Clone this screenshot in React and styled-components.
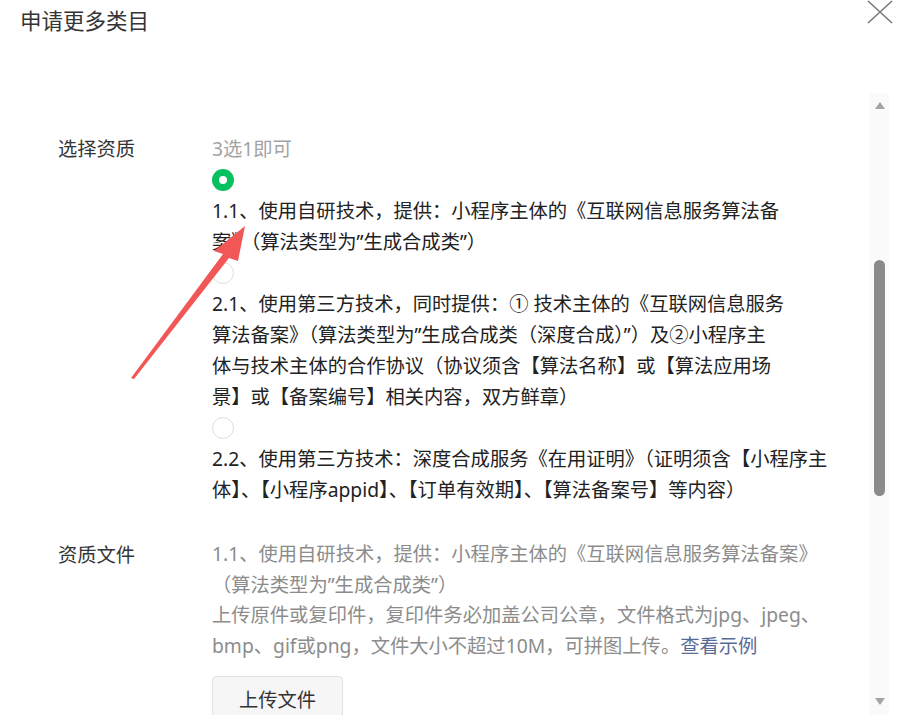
import styled, { createGlobalStyle } from "styled-components";

const GlobalStyle = createGlobalStyle`
  html, body {
    margin: 0;
    padding: 0;
    background: #fff;
  }
  body {
    font-family: "Noto Sans", "Noto Sans CJK SC", sans-serif;
    color: #333;
  }
`

const options = [
  {
    id: "1.1",
    checked: true,
    lines: [
      "1.1、使用自研技术，提供：小程序主体的《互联网信息服务算法备",
      "案》（算法类型为”生成合成类”）",
    ],
  },
  {
    id: "2.1",
    lines: [
      "2.1、使用第三方技术，同时提供：① 技术主体的《互联网信息服务",
      "算法备案》（算法类型为”生成合成类（深度合成）”）及②小程序主",
      "体与技术主体的合作协议（协议须含【算法名称】或【算法应用场",
      "景】或【备案编号】相关内容，双方鲜章）",
    ],
  },
  {
    id: "2.2",
    lines: [
      "2.2、使用第三方技术：深度合成服务《在用证明》（证明须含【小程序主",
      "体】、【小程序appid】、【订单有效期】、【算法备案号】等内容）",
    ],
  },
]

const Lines = ({ lines }) =>
  lines.map((line, i) => (
    <span key={i}>
      {line}
      {i < lines.length - 1 && <br />}
    </span>
  ))

const App = () => {
  return (
    <>
      <GlobalStyle />
      <Dialog>
        <Header>
          <Title>申请更多类目</Title>
          <CloseBtn aria-label="关闭">
            <svg width="26" height="24" viewBox="0 0 26 24">
              <path d="M1 1 L25 23 M25 1 L1 23" stroke="#7a7a7a" strokeWidth="1.6" fill="none" />
            </svg>
          </CloseBtn>
        </Header>
        <Body>
          <Content>
            <Row>
              <Label>选择资质</Label>
              <Field>
                <Hint>3选1即可</Hint>
                {options.map((opt) => (
                  <Option key={opt.id}>
                    <Radio $checked={opt.checked} />
                    <OptionText>
                      <Lines lines={opt.lines} />
                    </OptionText>
                  </Option>
                ))}
              </Field>
            </Row>
            <Row $gap="34px">
              <Label>资质文件</Label>
              <Field>
                <Desc>
                  1.1、使用自研技术，提供：小程序主体的《互联网信息服务算法备案》
                  <br />
                  （算法类型为”生成合成类”）
                  <br />
                  上传原件或复印件，复印件务必加盖公司公章，文件格式为jpg、jpeg、
                  <br />
                  bmp、gif或png，文件大小不超过10M，可拼图上传。<Link>查看示例</Link>
                </Desc>
                <UploadBtn>上传文件</UploadBtn>
              </Field>
            </Row>
          </Content>
          <Track>
            <Arrow />
            <Thumb />
            <Arrow $down />
          </Track>
        </Body>
        <Pointer viewBox="0 0 905 715" width="905" height="715">
          <polygon
            points="245,226 214,251 223,254 131,378 134,379 229,258 238,261"
            fill="#f25757"
          />
        </Pointer>
      </Dialog>
    </>
  )
}

const Dialog = styled.div`
  position: relative;
  height: 715px;
  display: flex;
  flex-direction: column;
  overflow: hidden;
  background: #fff;
`
const Header = styled.div`
  height: 93px;
  flex-shrink: 0;
  display: flex;
  justify-content: space-between;
  align-items: flex-start;
`
const Title = styled.h1`
  margin: 0;
  padding: 7px 0 0 20px;
  font-size: 21.5px;
  line-height: 27px;
  font-weight: 400;
  color: #353535;
`
const CloseBtn = styled.button`
  margin: 0 12px 0 0;
  padding: 0;
  border: 0;
  background: none;
  display: flex;
`
const Body = styled.div`
  flex: 1;
  min-height: 0;
  display: flex;
`
const Content = styled.div`
  flex: 1;
  overflow: hidden;
  padding: 40px 0 0 58px;
  font-size: 19.3px;
  line-height: 31px;
`
const Row = styled.div`
  display: grid;
  grid-template-columns: 154px 1fr;
  margin-top: ${(p) => p.$gap || "0"};
`
const Label = styled.div`
  color: #353535;
`
const Field = styled.div`
  display: flex;
  flex-direction: column;
  align-items: flex-start;
`
const Hint = styled.div`
  color: #a3a3a3;
`
const Option = styled.div`
  display: flex;
  flex-direction: column;
  align-items: flex-start;
`
const Radio = styled.span`
  box-sizing: border-box;
  width: 22px;
  height: 22px;
  margin: 5px 0 4px;
  border-radius: 50%;
  border: ${(p) => (p.$checked ? "7px solid #07c160" : "1px solid #dedede")};
  background: #fff;
`
const OptionText = styled.div`
  color: #222;
  white-space: nowrap;
`
const Desc = styled.div`
  color: #8c8c8c;
  white-space: nowrap;
  line-height: 30.7px;
`
const Link = styled.a`
  color: #576b95;
  cursor: pointer;
`
const UploadBtn = styled.button`
  margin-top: 14px;
  width: 131px;
  height: 46px;
  border: 1px solid #e2e2e2;
  border-radius: 4px;
  background: #f6f6f7;
  font-family: inherit;
  font-size: 19.3px;
  color: #333;
`
const Track = styled.div`
  width: 19px;
  margin-right: 16px;
  background: #fafafa;
  display: flex;
  flex-direction: column;
  align-items: center;
`
const Arrow = styled.span`
  width: 0;
  height: 0;
  border-left: 5.5px solid transparent;
  border-right: 5.5px solid transparent;
  ${(p) =>
    p.$down
      ? `border-top: 7px solid #a3a3a3; margin-top: auto; margin-bottom: 10px;`
      : `border-bottom: 7px solid #a3a3a3; margin-top: 9px;`}
`
const Thumb = styled.span`
  width: 11px;
  height: 236px;
  margin-top: 151px;
  border-radius: 6px;
  background: #8a8a8a;
`
const Pointer = styled.svg`
  position: absolute;
  left: 0;
  top: 0;
  pointer-events: none;
`

export default App
